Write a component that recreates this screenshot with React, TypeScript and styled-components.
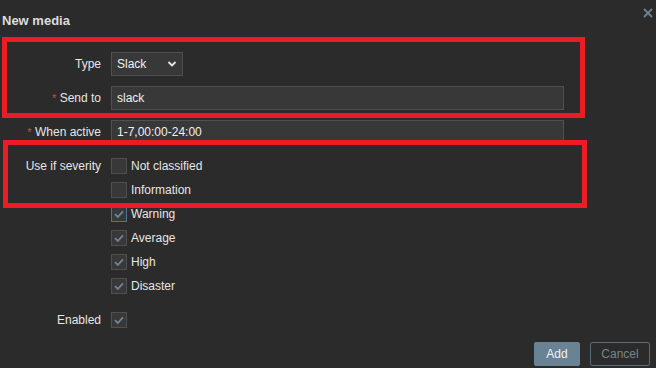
import React from 'react'
import styled, { createGlobalStyle } from 'styled-components'

const Global = createGlobalStyle`
  html, body {
    margin: 0;
    padding: 0;
    background: #2b2b2b;
  }
  body {
    font-family: "Liberation Sans", Arial, sans-serif;
    font-size: 12px;
    color: #e6e6e6;
  }
`

const severities = [
  { name: 'Not classified', checked: false },
  { name: 'Information', checked: false },
  { name: 'Warning', checked: true, focused: true },
  { name: 'Average', checked: true },
  { name: 'High', checked: true },
  { name: 'Disaster', checked: true },
]

const CheckMark = () => (
  <svg width="12" height="12" viewBox="0 0 12 12">
    <path d="M2 6.2 L4.8 9 L10 3.4" fill="none" stroke="#6f8798" strokeWidth="1.8" />
  </svg>
)

const Chevron = () => (
  <svg width="10" height="8" viewBox="0 0 10 8">
    <path d="M1.5 2 L5 5.5 L8.5 2" fill="none" stroke="#e8e8e8" strokeWidth="1.8" />
  </svg>
)

const App: React.FC = () => {
  return (
    <Dialog>
      <Global />
      <Header>
        <Title>New media</Title>
        <Close aria-label="Close">
          <svg width="10" height="10" viewBox="0 0 10 10">
            <path d="M1 1 L9 9 M9 1 L1 9" stroke="#6f808c" strokeWidth="1.8" />
          </svg>
        </Close>
      </Header>
      <Form>
        <Label>Type</Label>
        <Select>
          <span>Slack</span>
          <Chevron />
        </Select>

        <Label><Req>*</Req> Send to</Label>
        <Input defaultValue="slack" />

        <Label><Req>*</Req> When active</Label>
        <Input defaultValue="1-7,00:00-24:00" />

        <TopLabel>Use if severity</TopLabel>
        <CheckList>
          {severities.map((s) => (
            <CheckItem key={s.name}>
              <Box $focused={s.focused}>{s.checked && <CheckMark />}</Box>
              {s.name}
            </CheckItem>
          ))}
        </CheckList>

        <EnabledLabel>Enabled</EnabledLabel>
        <EnabledField>
          <Box><CheckMark /></Box>
        </EnabledField>
      </Form>
      <Footer>
        <AddButton>Add</AddButton>
        <CancelButton>Cancel</CancelButton>
      </Footer>

      <Highlight $top={37} $left={2} $width={583} $height={81} />
      <Highlight $top={140} $left={3} $width={584} $height={68} />
    </Dialog>
  )
}

export default App

const Dialog = styled.div`
  position: relative;
  width: 656px;
  height: 368px;
  overflow: hidden;
`
const Header = styled.div`
  display: flex;
  justify-content: space-between;
  align-items: flex-start;
  height: 42px;
  padding: 0 3px 0 2px;
`
const Title = styled.h4`
  margin: 0;
  font-size: 13px;
  font-weight: bold;
  line-height: 42px;
  color: #dcdcdc;
`
const Close = styled.div`
  margin-top: 8px;
  width: 10px;
  height: 10px;
  display: flex;
`
const Form = styled.div`
  display: grid;
  grid-template-columns: 101px 453px;
  column-gap: 10px;
  row-gap: 10px;
  margin-top: 10px;
`
const Label = styled.div`
  text-align: right;
  line-height: 24px;
  white-space: nowrap;
  color: #e6e6e6;
`
const TopLabel = styled(Label)`
  line-height: 16px;
  padding-top: 4px;
`
const EnabledLabel = styled(TopLabel)`
  padding-top: 8px;
`
const EnabledField = styled.div`
  padding-top: 8px;
  display: flex;
`
const Req = styled.span`
  color: #d24b4b;
  font-size: 11px;
`
const Select = styled.div`
  box-sizing: border-box;
  width: 72px;
  height: 24px;
  background: #383838;
  border: 1px solid #4f4f4f;
  display: flex;
  align-items: center;
  justify-content: space-between;
  padding: 0 5px 0 5px;
  color: #f0f0f0;
`
const Input = styled.input`
  box-sizing: border-box;
  width: 453px;
  height: 24px;
  background: #383838;
  border: 1px solid #4f4f4f;
  padding: 0 5px;
  color: #f0f0f0;
  font-family: inherit;
  font-size: 12px;
  outline: none;
`
const CheckList = styled.div`
  display: flex;
  flex-direction: column;
  gap: 8px;
  padding-top: 4px;
`
const CheckItem = styled.label`
  display: flex;
  align-items: center;
  gap: 4px;
  height: 16px;
  color: #e6e6e6;
`
const Box = styled.span<{ $focused?: boolean }>`
  box-sizing: border-box;
  width: 16px;
  height: 16px;
  background: #383838;
  border: 1px solid ${(p) => (p.$focused ? '#56728a' : '#4f4f4f')};
  display: flex;
  align-items: center;
  justify-content: center;
`
const Footer = styled.div`
  display: flex;
  justify-content: flex-end;
  gap: 10px;
  padding-right: 6px;
  margin-top: 14px;
`
const ButtonBase = styled.button`
  box-sizing: border-box;
  height: 24px;
  font-family: inherit;
  font-size: 12px;
  padding: 0;
  border-radius: 2px;
`
const AddButton = styled(ButtonBase)`
  width: 46px;
  background: #6a8394;
  border: 1px solid #6a8394;
  color: #eef2f5;
`
const CancelButton = styled(ButtonBase)`
  width: 60px;
  background: transparent;
  border: 1px solid #566d7c;
  color: #75858f;
`
const Highlight = styled.div<{ $top: number; $left: number; $width: number; $height: number }>`
  position: absolute;
  box-sizing: border-box;
  top: ${(p) => p.$top}px;
  left: ${(p) => p.$left}px;
  width: ${(p) => p.$width}px;
  height: ${(p) => p.$height}px;
  border: 5px solid #ec1c24;
  pointer-events: none;
`
